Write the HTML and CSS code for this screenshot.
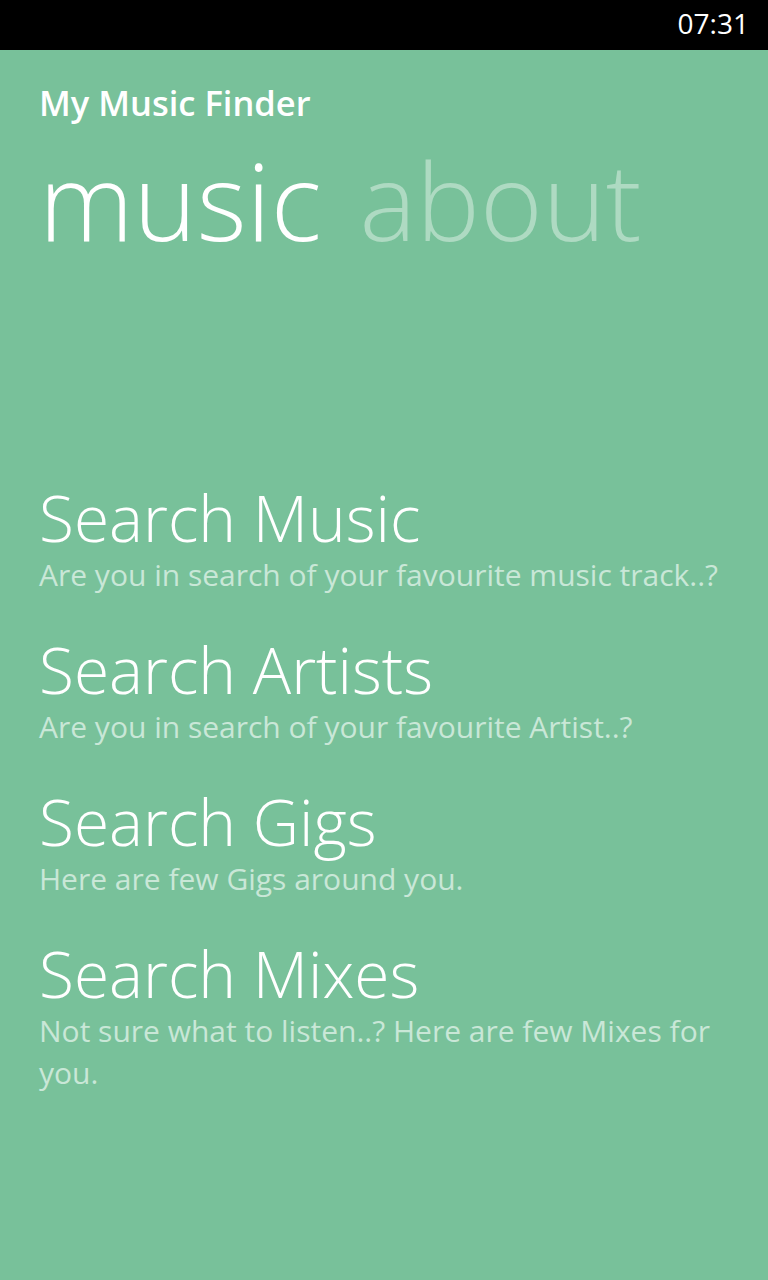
FILE: index.html
```html
<!DOCTYPE html>
<html lang="en">
<head>
<meta charset="utf-8">
<title>My Music Finder</title>
<link rel="stylesheet" href="styles.css">
</head>
<body>
<div class="status-bar">
  <span class="clock">07:31</span>
</div>
<main class="app">
  <header class="app-header">
    <div class="app-title">My Music Finder</div>
    <nav class="pivot">
      <span class="pivot-item active">music</span>
      <span class="pivot-item">about</span>
    </nav>
  </header>
  <ul class="menu">
    <li class="menu-item">
      <div class="menu-title">Search Music</div>
      <div class="menu-desc">Are you in search of your favourite music track..?</div>
    </li>
    <li class="menu-item">
      <div class="menu-title">Search Artists</div>
      <div class="menu-desc">Are you in search of your favourite Artist..?</div>
    </li>
    <li class="menu-item">
      <div class="menu-title">Search Gigs</div>
      <div class="menu-desc">Here are few Gigs around you.</div>
    </li>
    <li class="menu-item">
      <div class="menu-title">Search Mixes</div>
      <div class="menu-desc">Not sure what to listen..? Here are few Mixes for you.</div>
    </li>
  </ul>
</main>
</body>
</html>
```

FILE: styles.css
```css
* {
  box-sizing: border-box;
}

html, body {
  margin: 0;
  padding: 0;
  height: 100%;
}

body {
  background: #78c19a;
  font-family: "Open Sans", "Noto Sans", sans-serif;
  color: #ffffff;
}

.status-bar {
  height: 50px;
  background: #000000;
  display: flex;
  justify-content: flex-end;
  align-items: flex-start;
  padding-right: 19px;
}

.clock {
  font-size: 28px;
  line-height: 46px;
  color: #ffffff;
}

.app {
  padding-left: 39px;
  padding-right: 30px;
}

.app-header {
  padding-top: 33px;
}

.app-title {
  font-size: 34.5px;
  font-weight: 600;
  line-height: 40px;
}

.pivot {
  display: flex;
  gap: 38px;
  margin-top: 17px;
  white-space: nowrap;
}

.pivot-item {
  font-size: 107px;
  font-weight: 300;
  line-height: 120px;
  color: #aedac2;
}

.pivot-item.active {
  color: #ffffff;
}

.menu {
  list-style: none;
  margin: 223px 0 0 0;
  padding: 0;
  display: flex;
  flex-direction: column;
  gap: 39px;
}

.menu-title {
  font-size: 64px;
  font-weight: 300;
  line-height: 70px;
}

.menu-desc {
  margin-top: 1px;
  font-size: 30px;
  line-height: 42px;
  color: #c9e7d7;
}
```
